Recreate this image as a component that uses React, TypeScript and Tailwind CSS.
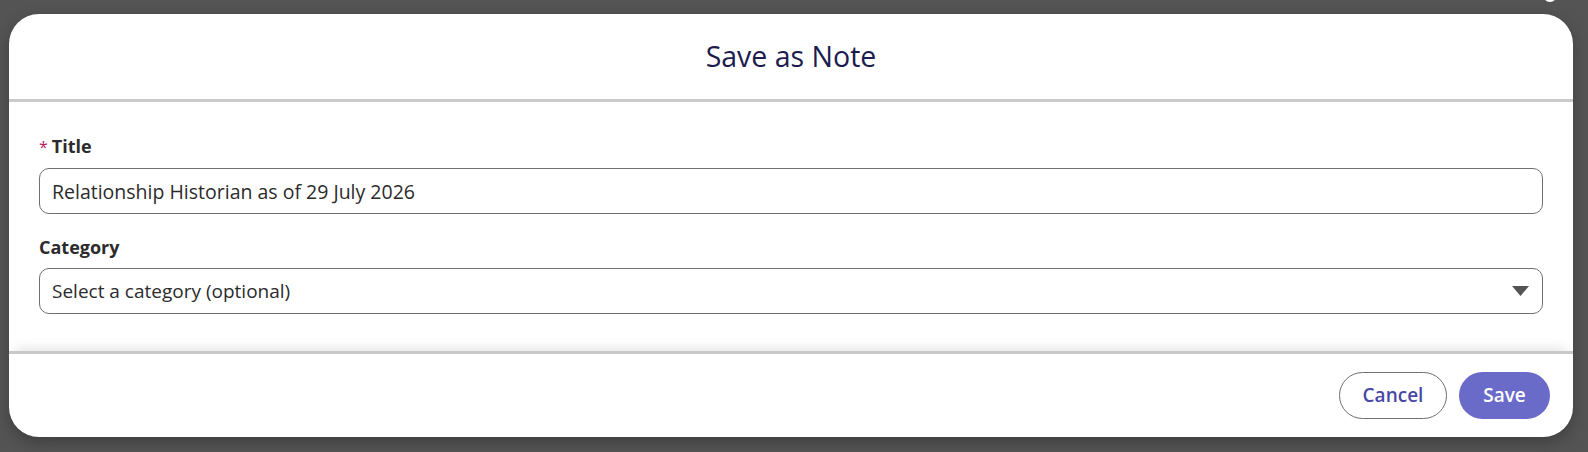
import { useState } from "react";

const font = { fontFamily: '"Open Sans", "Noto Sans", sans-serif' };

function Field({
  label,
  required,
  children,
  className,
}: {
  label: string;
  required?: boolean;
  children: React.ReactNode;
  className?: string;
}) {
  return (
    <div className={className}>
      <div className="flex items-baseline text-[18px] leading-[24px] font-bold text-[#2b2b2b]">
        {required && <span className="mr-[4px] text-[16px] font-normal text-[#b3245c]">*</span>}
        {label}
      </div>
      <div className="mt-[9px]">{children}</div>
    </div>
  );
}

export default function App() {
  const [title, setTitle] = useState("Relationship Historian as of 29 July 2026");

  return (
    <div className="relative h-[452px] w-full overflow-hidden bg-[#545454] pl-[9px] pt-[14px]" style={font}>
      {/* close button peeking above the window edge */}
      <div className="absolute left-[1543px] top-[-14px] h-[16px] w-[14px] rounded-full bg-white" />

      <div className="flex h-[423px] w-[1564px] flex-col overflow-hidden rounded-[30px] bg-white shadow-[0_6px_16px_rgba(0,0,0,0.25)]">
        <header className="flex h-[88px] shrink-0 items-center justify-center border-b-[3px] border-[#c9c9c9]">
          <h1 className="text-[28.5px] font-normal text-[#1c1c4e]">Save as Note</h1>
        </header>

        <div className="flex-1 px-[30px] pt-[32px]">
          <Field label="Title" required>
            <input
              value={title}
              onChange={(e) => setTitle(e.target.value)}
              className="h-[46px] w-full rounded-[10px] border border-[#6f6f6f] px-[12px] text-[19.5px] text-[#2b2b2b] outline-none"
            />
          </Field>

          <Field label="Category" className="mt-[21px]">
            <div className="flex h-[46px] w-full items-center justify-between rounded-[10px] border border-[#6f6f6f] pl-[12px] pr-[13px] text-[19px] text-[#2b2b2b]">
              <span>Select a category (optional)</span>
              <svg width="17" height="10" viewBox="0 0 17 10">
                <path d="M0 0h17L8.5 10z" fill="#555555" />
              </svg>
            </div>
          </Field>
        </div>

        <footer className="flex h-[86px] shrink-0 items-center justify-end gap-[12px] border-t-[3px] border-[#c9c9c9] pr-[23px] shadow-[0_-8px_12px_-6px_rgba(0,0,0,0.12)]">
          <button className="h-[47px] w-[108px] rounded-full border border-[#707070] bg-white text-[19px] font-semibold text-[#4848a6]">
            Cancel
          </button>
          <button className="h-[47px] w-[91px] rounded-full bg-[#6a6ac9] text-[19px] font-semibold text-white">
            Save
          </button>
        </footer>
      </div>
    </div>
  );
}
